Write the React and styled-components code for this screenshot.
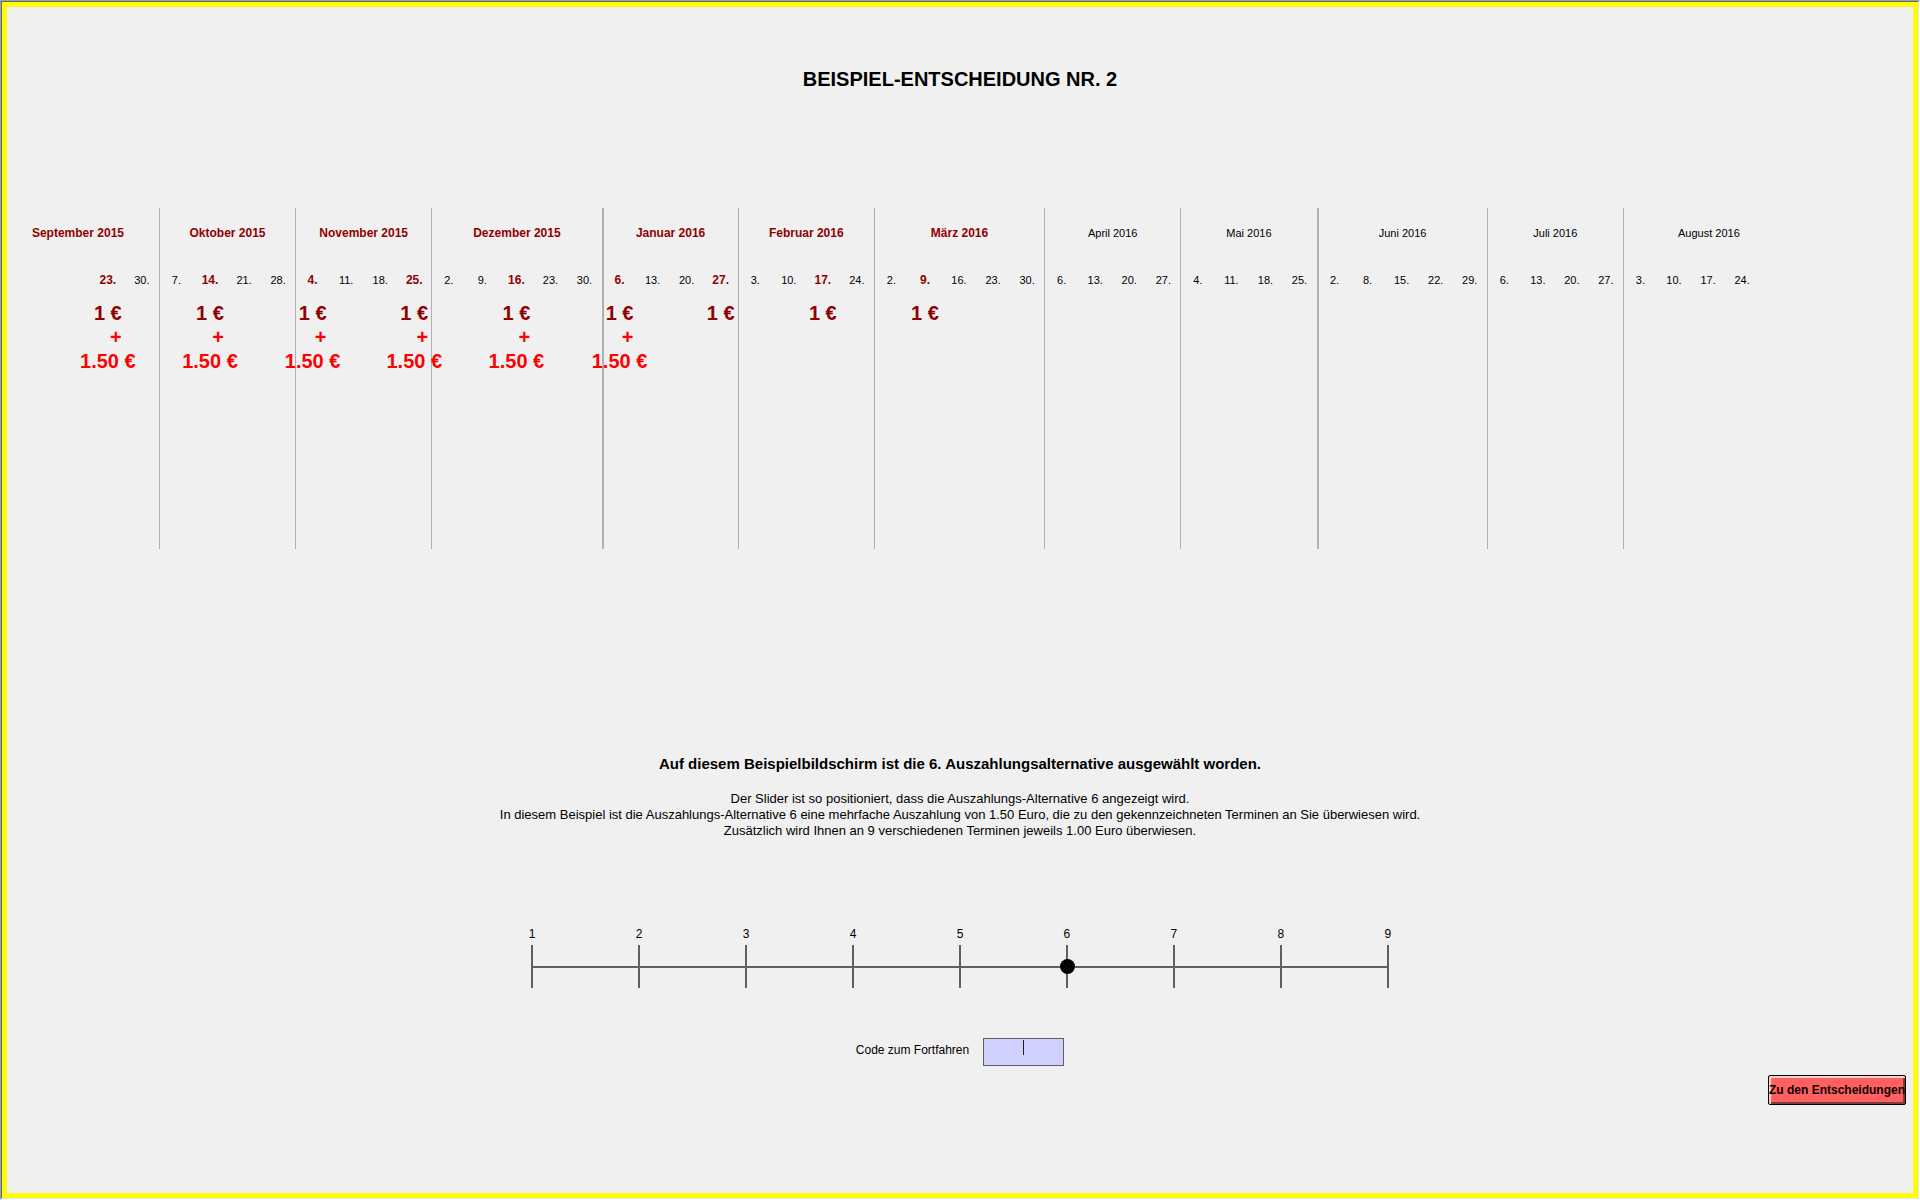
import React, { useState } from "react";
import styled, { createGlobalStyle } from "styled-components";

const GlobalStyle = createGlobalStyle`
  *, *::before, *::after { box-sizing: border-box; }
  body {
    margin: 0;
    background: #f0f0f0;
    color: #000;
    font-family: "Liberation Sans", Arial, sans-serif;
    font-size: 12px;
  }
`;

const Window = styled.div`
  min-height: 100vh;
  display: flex;
  border: 1px solid;
  border-color: #a0a0a0 #fff #fff #a0a0a0;
`;

const Bevel = styled.div`
  flex: 1;
  display: flex;
  border: 1px solid;
  border-color: #696969 #e3e3e3 #e3e3e3 #696969;
`;

const Screen = styled.main`
  flex: 1;
  min-width: 0;
  display: flex;
  flex-direction: column;
  align-items: center;
  border: 5px solid #ff0;
  background: #f0f0f0;
  padding: 60px 0 80px;
`;

const Title = styled.h1`
  margin: 0 0 117px;
  font-size: 20px;
  line-height: 24px;
  font-weight: bold;
`;

const Calendar = styled.table`
  align-self: flex-start;
  width: 93.75%;
  table-layout: fixed;
  border-collapse: separate;
  border-spacing: 0;
  text-align: center;
`;

const Week = styled.col`
  width: ${(p) => (p.$half ? "0.88%" : "1.9048%")};
`;

const Cell = styled.td`
  height: ${(p) => p.$height}px;
  padding: 0;
  vertical-align: middle;
  white-space: nowrap;
  font-size: ${(p) => (p.$paid ? 12 : 11)}px;
  font-weight: ${(p) => (p.$paid ? "bold" : "normal")};
  color: ${(p) => (p.$paid ? "#900000" : "#000")};
  border-left: ${(p) => p.$line || 0}px solid #b0b0b0;
`;

const MonthCell = styled(Cell)`
  padding-right: ${(p) => (p.$first ? 10 : 0)}px;
`;

const AmountCell = styled(Cell)`
  vertical-align: top;
`;

const Amounts = styled.div`
  display: flex;
  flex-direction: column;
  align-items: center;
  font-size: 20px;
  line-height: 24px;
`;

const Extra = styled.span`
  color: #f00;
`;

const Plus = styled(Extra)`
  padding-left: 16px;
`;

const Heading = styled.h2`
  margin: 206px 0 18px;
  font-size: 15px;
  line-height: 18px;
  font-weight: bold;
`;

const Description = styled.p`
  margin: 0;
  font-size: 13px;
  line-height: 16px;
  text-align: center;
`;

const Scale = styled.div`
  display: grid;
  width: 45%;
  margin: 87px 0 50px;
`;

const Steps = styled.div`
  grid-area: 1 / 1;
  display: flex;
  justify-content: space-between;
`;

const Step = styled.div`
  width: 2px;
  display: flex;
  flex-direction: column;
  align-items: center;
  gap: 3px;
  line-height: 16px;

  &::after {
    content: "";
    width: 2px;
    height: 43px;
    background: #606060;
  }
`;

const Slider = styled.input`
  grid-area: 1 / 1;
  align-self: end;
  appearance: none;
  margin: 0 -7px;
  height: 43px;
  background: linear-gradient(#606060, #606060) center / calc(100% - 14px) 2px no-repeat;
  outline: none;

  &::-webkit-slider-thumb {
    appearance: none;
    width: 15px;
    height: 15px;
    border-radius: 50%;
    background: #000;
  }
`;

const CodeRow = styled.div`
  display: flex;
  align-items: center;
  gap: 14px;
`;

const CodeLabel = styled.label`
  font-size: 12px;
  padding-bottom: 4px;
`;

const CodeInput = styled.input`
  width: 81px;
  height: 28px;
  padding: 0 4px;
  border: 1px solid #606060;
  text-align: center;
  font: inherit;
  outline: none;
  background: linear-gradient(#202020, #202020) center 1px / 1px 15px no-repeat #d0d0ff;
`;

const Continue = styled.button`
  align-self: flex-end;
  margin: 9px 7px 0 0;
  padding: 0;
  width: 138px;
  height: 30px;
  border: 1px solid #000;
  border-radius: 2px;
  background: #ff6060;
  box-shadow: inset 2px 2px #ffcfcf, inset -2px -2px #803c3c;
  color: #100000;
  font: bold 12px "Liberation Sans", Arial, sans-serif;
  white-space: nowrap;
`;

const months = [
  { name: "September 2015", days: [23, 30], first: true },
  { name: "Oktober 2015", days: [7, 14, 21, 28] },
  { name: "November 2015", days: [4, 11, 18, 25] },
  { name: "Dezember 2015", days: [2, 9, 16, 23, 30] },
  { name: "Januar 2016", days: [6, 13, 20, 27], line: 2 },
  { name: "Februar 2016", days: [3, 10, 17, 24] },
  { name: "März 2016", days: [2, 9, 16, 23, 30] },
  { name: "April 2016", days: [6, 13, 20, 27] },
  { name: "Mai 2016", days: [4, 11, 18, 25] },
  { name: "Juni 2016", days: [2, 8, 15, 22, 29], line: 2 },
  { name: "Juli 2016", days: [6, 13, 20, 27] },
  { name: "August 2016", days: [3, 10, 17, 24, null] },
];

const payments = {
  "September 2015": { 23: "both" },
  "Oktober 2015": { 14: "both" },
  "November 2015": { 4: "both", 25: "both" },
  "Dezember 2015": { 16: "both" },
  "Januar 2016": { 6: "both", 27: "base" },
  "Februar 2016": { 17: "base" },
  "März 2016": { 9: "base" },
};

const weeks = months.flatMap((m) => [
  ...(m.first ? [{ day: null, line: 0 }, { day: null, line: 0 }, { day: null, line: 0 }] : []),
  ...m.days.map((day, i) => ({
    day,
    line: i === 0 && !m.first ? m.line || 1 : 0,
    pay: payments[m.name]?.[day],
  })),
]);

function PaymentCalendar() {
  return (
    <Calendar>
      <colgroup>
        {weeks.map((w, i) => (
          <Week key={i} $half={i === 0} />
        ))}
      </colgroup>
      <thead>
        <tr>
          {months.map((m) => (
            <MonthCell
              as="th"
              key={m.name}
              scope="colgroup"
              colSpan={m.first ? 5 : m.days.length}
              $height={50}
              $first={m.first}
              $paid={Boolean(payments[m.name])}
              $line={m.first ? 0 : m.line || 1}
            >
              {m.name}
            </MonthCell>
          ))}
        </tr>
      </thead>
      <tbody>
        <tr>
          {weeks.map((w, i) => (
            <Cell key={i} $height={43} $paid={Boolean(w.pay)} $line={w.line}>
              {w.day && `${w.day}.`}
            </Cell>
          ))}
        </tr>
        <tr>
          {weeks.map((w, i) => (
            <AmountCell key={i} $height={248} $paid={Boolean(w.pay)} $line={w.line}>
              {w.pay && (
                <Amounts>
                  <span>1 €</span>
                  {w.pay === "both" && <Plus>+</Plus>}
                  {w.pay === "both" && <Extra>1.50 €</Extra>}
                </Amounts>
              )}
            </AmountCell>
          ))}
        </tr>
      </tbody>
    </Calendar>
  );
}

export default function App() {
  const [choice, setChoice] = useState(6);
  return (
    <Window>
      <GlobalStyle />
      <Bevel>
        <Screen>
          <Title>BEISPIEL-ENTSCHEIDUNG NR. 2</Title>
          <PaymentCalendar />
          <Heading>Auf diesem Beispielbildschirm ist die 6. Auszahlungsalternative ausgewählt worden.</Heading>
          <Description>
            Der Slider ist so positioniert, dass die Auszahlungs-Alternative 6 angezeigt wird.
            <br />
            In diesem Beispiel ist die Auszahlungs-Alternative 6 eine mehrfache Auszahlung von 1.50 Euro, die zu den
            gekennzeichneten Terminen an Sie überwiesen wird.
            <br />
            Zusätzlich wird Ihnen an 9 verschiedenen Terminen jeweils 1.00 Euro überwiesen.
          </Description>
          <Scale>
            <Steps>
              {[1, 2, 3, 4, 5, 6, 7, 8, 9].map((n) => (
                <Step key={n}>{n}</Step>
              ))}
            </Steps>
            <Slider
              type="range"
              min="1"
              max="9"
              aria-label="Auszahlungsalternative"
              value={choice}
              onChange={(e) => setChoice(Number(e.target.value))}
            />
          </Scale>
          <CodeRow>
            <CodeLabel htmlFor="code">Code zum Fortfahren</CodeLabel>
            <CodeInput id="code" type="text" autoComplete="off" />
          </CodeRow>
          <Continue type="button">Zu den Entscheidungen</Continue>
        </Screen>
      </Bevel>
    </Window>
  );
}
